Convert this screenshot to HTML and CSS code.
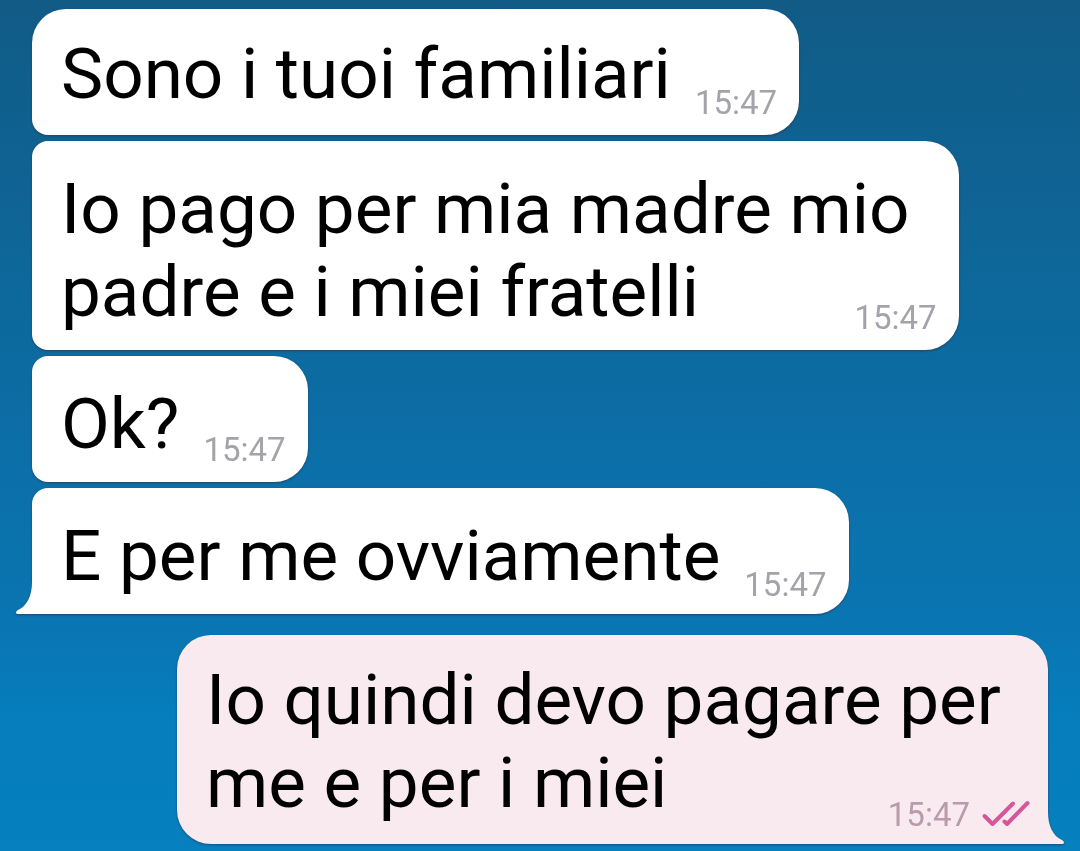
FILE: index.html
```html
<!DOCTYPE html>
<html lang="it">
<head>
    <meta charset="UTF-8">
    <meta name="viewport" content="width=device-width, initial-scale=1.0">
    <title>Chat</title>
    <link rel="stylesheet" href="styles.css">
</head>
<body>

    <main class="chat">
        <!-- messaggi ricevuti -->
        <div class="group received">
            <div class="bubble first">
                <p class="text">Sono i tuoi familiari</p>
                <div class="meta"><time>15:47</time></div>
            </div>
            <div class="bubble multiline">
                <p class="text">Io pago per mia madre mio<br>padre e i miei fratelli</p>
                <div class="meta"><time>15:47</time></div>
            </div>
            <div class="bubble">
                <p class="text">Ok?</p>
                <div class="meta"><time>15:47</time></div>
            </div>
            <div class="bubble last">
                <p class="text">E per me ovviamente</p>
                <div class="meta"><time>15:47</time></div>
                <svg class="tail" viewBox="0 0 34 40" aria-hidden="true">
                    <path d="M16 0 V8 C16 22 11 32 2 36 Q0 37 0 38.500 Q0 40 2 40 H34 V0 Z"/>
                </svg>
            </div>
        </div>

        <!-- messaggi inviati -->
        <div class="group sent">
            <div class="bubble first last multiline">
                <p class="text">Io quindi devo pagare per<br>me e per i miei</p>
                <div class="meta">
                    <time>15:47</time>
                    <svg class="ticks" viewBox="0 1 48 28" role="img" aria-label="Letto">
                        <path d="M2.500 16 L10.500 24 L31 3.500"/>
                        <path d="M22.500 21.500 L25 24 L45.500 3"/>
                    </svg>
                </div>
                <svg class="tail" viewBox="0 0 34 40" aria-hidden="true">
                    <path d="M16 0 V8 C16 22 11 32 2 36 Q0 37 0 38.500 Q0 40 2 40 H34 V0 Z"/>
                </svg>
            </div>
        </div>
    </main>

</body>
</html>
```
FILE: styles.css
```css
* {
    box-sizing: border-box;
}

body {
    margin: 0;
    min-height: 100vh;
    background: linear-gradient(#115b86, #0c6ca2 45%, #0a75b2 72%, #067dbc 85%, #0680be);
    font-family: Roboto, "Noto Sans", sans-serif;
}

.chat {
    display: flex;
    flex-direction: column;
    gap: 21px;
    padding: 9px 32px 7px;
}

.group {
    display: flex;
    flex-direction: column;
    gap: 6px;
}

.received {
    align-items: flex-start;
}

.sent {
    align-items: flex-end;
}

.bubble {
    position: relative;
    display: flex;
    align-items: flex-end;
    padding: 0 22px 0 29px;
    background-color: #fff;
    border-radius: 16px 34px 34px 16px;
    filter: drop-shadow(0 1px 1px rgba(50, 40, 60, 0.6));
}

.bubble.first {
    border-top-left-radius: 34px;
}

.text {
    margin: 0;
    padding: 26px 24px 17px 0;
    font-size: 71px;
    line-height: 83px;
    color: #000;
}

.first .text {
    padding-top: 23px;
    padding-bottom: 20px;
}

.meta {
    display: flex;
    align-items: center;
    gap: 12px;
    margin-bottom: 12px;
    font-size: 33px;
    line-height: 40px;
    color: #a3a3a9;
}

.last .meta {
    margin-bottom: 9px;
}

/* l'ora sta accanto all'ultima riga, sotto la prima */
.multiline .text {
    padding-right: 27px;
}

.multiline .meta {
    margin-left: -82px;
}

.received .last {
    border-bottom-left-radius: 0;
}

.sent .bubble {
    padding-right: 18px;
    background-color: #f8eaef;
    border-radius: 34px 34px 0 34px;
}

.sent .multiline .meta {
    margin-left: -140px;
    color: #b99bab;
}

.tail {
    position: absolute;
    left: -16px;
    bottom: 0;
    width: 34px;
    height: 40px;
    fill: #fff;
}

.sent .tail {
    left: auto;
    right: -16px;
    transform: scaleX(-1);
    fill: #f8eaef;
}

.ticks {
    width: 48px;
    height: 28px;
    overflow: visible;
    fill: none;
    stroke: #d9559b;
    stroke-width: 4;
    stroke-linecap: round;
    stroke-linejoin: round;
}
```
